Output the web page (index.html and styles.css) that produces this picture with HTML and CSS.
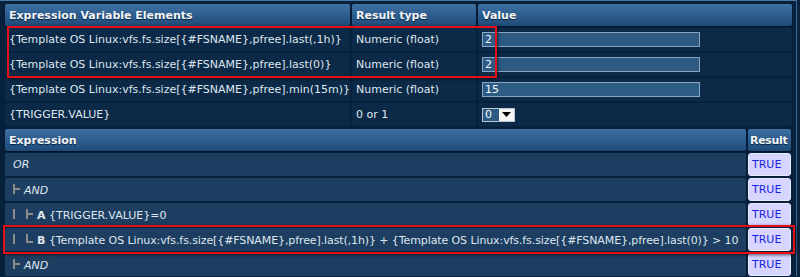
FILE: index.html
```html
<!DOCTYPE html>
<html>
<head>
<meta charset="utf-8">
<link rel="stylesheet" href="styles.css">
</head>
<body>
<div class="frame">
  <table class="grid vars">
    <colgroup><col class="w-expr"><col class="w-type"><col class="w-val"></colgroup>
    <thead>
      <tr><th>Expression Variable Elements</th><th>Result type</th><th>Value</th></tr>
    </thead>
    <tbody>
      <tr><td>{Template OS Linux:vfs.fs.size[{#FSNAME},pfree].last(,1h)}</td><td>Numeric (float)</td><td><span class="input">2</span></td></tr>
      <tr><td>{Template OS Linux:vfs.fs.size[{#FSNAME},pfree].last(0)}</td><td>Numeric (float)</td><td><span class="input">2</span></td></tr>
      <tr><td>{Template OS Linux:vfs.fs.size[{#FSNAME},pfree].min(15m)}</td><td>Numeric (float)</td><td><span class="input">15</span></td></tr>
      <tr><td>{TRIGGER.VALUE}</td><td>0 or 1</td><td><span class="select"><span class="sel-val">0</span><span class="sel-btn"><svg width="9" height="5" viewBox="0 0 9 5"><path d="M0 0h9L4.5 5z" fill="#000"/></svg></span></span></td></tr>
    </tbody>
  </table>
  <table class="grid tests">
    <colgroup><col class="w-exp2"><col class="w-res"></colgroup>
    <thead>
      <tr><th>Expression</th><th class="h-res">Result</th></tr>
    </thead>
    <tbody>
      <tr><td class="ex"><i>OR</i></td><td class="res">TRUE</td></tr>
      <tr><td class="ex"><svg class="tr" width="10" height="12" viewBox="0 0 10 12"><path d="M1 1v10M1 6h6" stroke="#8c8c8c" stroke-width="2" fill="none"/></svg><i>AND</i></td><td class="res">TRUE</td></tr>
      <tr><td class="ex"><svg class="tr" width="12" height="12" viewBox="0 0 12 12"><path d="M1 1v10" stroke="#8c8c8c" stroke-width="2" fill="none"/></svg><svg class="tr" width="10" height="12" viewBox="0 0 10 12"><path d="M1 1v10M1 6h6" stroke="#8c8c8c" stroke-width="2" fill="none"/></svg><b>A</b> {TRIGGER.VALUE}=0</td><td class="res">TRUE</td></tr>
      <tr><td class="ex"><svg class="tr" width="12" height="12" viewBox="0 0 12 12"><path d="M1 1v10" stroke="#8c8c8c" stroke-width="2" fill="none"/></svg><svg class="tr" width="10" height="12" viewBox="0 0 10 12"><path d="M1 1v9M1 9h6" stroke="#8c8c8c" stroke-width="2" fill="none"/></svg><b>B</b> <span class="long">{Template OS Linux:vfs.fs.size[{#FSNAME},pfree].last(,1h)} + {Template OS Linux:vfs.fs.size[{#FSNAME},pfree].last(0)} &gt; 10</span></td><td class="res">TRUE</td></tr>
      <tr><td class="ex"><svg class="tr" width="10" height="12" viewBox="0 0 10 12"><path d="M1 1v10M1 6h6" stroke="#8c8c8c" stroke-width="2" fill="none"/></svg><i>AND</i></td><td class="res">TRUE</td></tr>
    </tbody>
  </table>
  <div class="mark mark-vars"></div>
  <div class="mark mark-expr"></div>
</div>
</body>
</html>
```
FILE: styles.css
```css
html, body {
  margin: 0;
  padding: 0;
  background: #0a2340;
}
body {
  width: 800px;
  height: 277px;
  overflow: hidden;
  font-family: "DejaVu Sans", sans-serif;
  font-size: 11px;
  color: #dfe6ee;
}
.frame {
  position: relative;
  width: 797px;
  height: 276px;
  border-top: 1px solid #4a7aa8;
  border-right: 1px solid #3d6b98;
  padding: 1px 0 0 3px;
  box-sizing: border-box;
  background: #07203b;
}
.grid {
  border-collapse: separate;
  border-spacing: 2px;
  table-layout: fixed;
}
.vars { width: 791px; }
.tests { width: 790px; margin-top: -1px; }
.w-expr { width: 345px; }
.w-type { width: 124px; }
.w-val { width: 314px; }
.w-exp2 { width: 741px; }
.w-res { width: 43px; }
.grid th {
  height: 22px;
  padding: 0 4px;
  text-align: left;
  font-weight: bold;
  color: #f2f6fa;
  text-shadow: 0 1px 1px #0b2036;
  background: linear-gradient(#3e70a2, #2a5a8b 60%, #1f4b79);
  border-radius: 2px;
  box-shadow: 0 1px 1px #04152a;
  white-space: nowrap;
  overflow: hidden;
}
.grid th.h-res {
  padding: 0 0 0 2px;
  letter-spacing: -0.3px;
}
.grid td {
  height: 23px;
  padding: 0 4px;
  white-space: nowrap;
  overflow: hidden;
  border-radius: 2px;
}
.vars td {
  background: #0c2a48;
}
.tests td {
  background: #1d3e61;
}
.tests td.ex {
  padding-left: 8px;
}
.long {
  letter-spacing: -0.1px;
}
.tests td.res {
  background: #d5d5ff;
  color: #1f1fe0;
  padding: 0 3px;
  border: 1px solid #eaeaff;
  border-radius: 3px;
  height: 21px;
}
.tr {
  vertical-align: -1px;
  margin-right: 1px;
}
.input {
  display: block;
  width: 212px;
  height: 13px;
  line-height: 13px;
  padding: 0 2px;
  background: #2d5b84;
  border: 1px solid #8aa7c2;
  color: #f4f8fc;
}
.select {
  display: inline-flex;
  height: 12px;
  border: 1px solid #b8c6d4;
  vertical-align: middle;
}
.sel-val {
  width: 14px;
  padding-left: 2px;
  background: #2d5b84;
  color: #f4f8fc;
  line-height: 12px;
}
.sel-btn {
  width: 15px;
  background: #f4f4f4;
  display: flex;
  align-items: center;
  justify-content: center;
}
.mark {
  position: absolute;
  border: 2px solid #e3101a;
  box-shadow: 1px 1px 3px rgba(0, 0, 0, 0.6);
  pointer-events: none;
}
.mark-vars {
  left: 7px;
  top: 25px;
  width: 486px;
  height: 48px;
}
.mark-expr {
  left: 3px;
  top: 224px;
  width: 788px;
  height: 25px;
}
```
